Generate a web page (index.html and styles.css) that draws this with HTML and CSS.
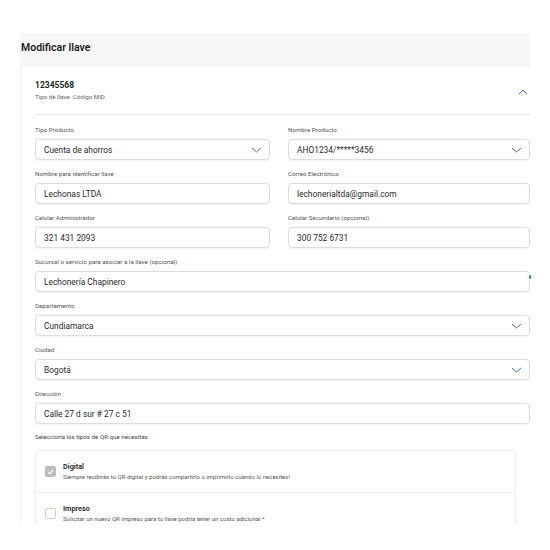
FILE: index.html
```html
<!DOCTYPE html>
<html lang="es">
<head>
<meta charset="utf-8">
<title>Modificar llave</title>
<link rel="stylesheet" href="styles.css">
</head>
<body>
<div class="page">
  <div class="panel">
    <div class="panel-head">Modificar llave</div>
    <div class="card">
      <div class="key-head">
        <div class="key-info">
          <div class="key-num">12345568</div>
          <div class="key-type">Tipo de llave: Código MID</div>
        </div>
        <svg class="chev-up" width="10" height="6" viewBox="0 0 10 6"><path d="M1 5 L5 1.2 L9 5" fill="none" stroke="#3f6fd0" stroke-width="1"/></svg>
      </div>
      <div class="form">
        <div class="row two">
          <div class="field">
            <div class="label">Tipo Producto</div>
            <div class="box select"><span>Cuenta de ahorros</span><svg class="chev" width="11" height="6" viewBox="0 0 11 6"><path d="M1 1 L5.5 5 L10 1" fill="none" stroke="#3f6fd0" stroke-width="1"/></svg></div>
          </div>
          <div class="field">
            <div class="label">Nombre Producto</div>
            <div class="box select"><span>AHO1234/*****3456</span><svg class="chev" width="11" height="6" viewBox="0 0 11 6"><path d="M1 1 L5.5 5 L10 1" fill="none" stroke="#3f6fd0" stroke-width="1"/></svg></div>
          </div>
        </div>
        <div class="row two">
          <div class="field">
            <div class="label">Nombre para identificar llave</div>
            <div class="box"><span>Lechonas LTDA</span></div>
          </div>
          <div class="field">
            <div class="label">Correo Electrónico</div>
            <div class="box"><span>lechonerialtda@gmail.com</span></div>
          </div>
        </div>
        <div class="row two">
          <div class="field">
            <div class="label">Celular Administrador</div>
            <div class="box"><span>321 431 2093</span></div>
          </div>
          <div class="field">
            <div class="label">Celular Secundario (opcional)</div>
            <div class="box"><span>300 752 6731</span></div>
          </div>
        </div>
        <div class="row">
          <div class="field">
            <div class="label">Sucursal o servicio para asociar a la llave (opcional)</div>
            <div class="box marked"><span>Lechonería Chapinero</span><i class="dot"></i></div>
          </div>
        </div>
        <div class="row">
          <div class="field">
            <div class="label">Departamento</div>
            <div class="box select"><span>Cundiamarca</span><svg class="chev" width="11" height="6" viewBox="0 0 11 6"><path d="M1 1 L5.5 5 L10 1" fill="none" stroke="#3f6fd0" stroke-width="1"/></svg></div>
          </div>
        </div>
        <div class="row">
          <div class="field">
            <div class="label">Ciudad</div>
            <div class="box select"><span>Bogotá</span><svg class="chev" width="11" height="6" viewBox="0 0 11 6"><path d="M1 1 L5.5 5 L10 1" fill="none" stroke="#3f6fd0" stroke-width="1"/></svg></div>
          </div>
        </div>
        <div class="row">
          <div class="field">
            <div class="label">Dirección</div>
            <div class="box"><span>Calle 27 d sur # 27 c 51</span></div>
          </div>
        </div>
        <div class="qr-label">Selecciona los tipos de QR que necesitas</div>
        <div class="qr-card">
          <div class="qr-row">
            <div class="check checked"><svg width="7" height="6" viewBox="0 0 7 6"><path d="M1 3 L2.8 4.8 L6 1.2" fill="none" stroke="#fff" stroke-width="1.1"/></svg></div>
            <div class="qr-text">
              <div class="qr-title">Digital</div>
              <div class="qr-desc">Siempre recibirás tu QR digital y podrás compartirlo o imprimirlo cuando lo necesites!</div>
            </div>
          </div>
          <div class="qr-row">
            <div class="check"></div>
            <div class="qr-text">
              <div class="qr-title">Impreso</div>
              <div class="qr-desc">Solicitar un nuevo QR impreso para tu llave podría tener un costo adicional *</div>
            </div>
          </div>
        </div>
      </div>
    </div>
  </div>
</div>
</body>
</html>
```

FILE: styles.css
```css
* { box-sizing: border-box; }
html, body { margin: 0; padding: 0; background: #fff; }
body { font-family: Roboto, "Liberation Sans", sans-serif; color: #222; }
.page { height: 525px; overflow: hidden; padding: 33px 20px 0 20px; }
.panel { width: 510px; background: #f7f7f7; padding-left: 2px; }
.panel-head {
  height: 32px; line-height: 30px; margin-left: -1px;
  font-size: 10.5px; font-weight: 600; color: #1d1d1d;
}
.card { background: #fff; border-top: 1px solid #eeeeee; padding: 0 0 20px 13px; }
.key-head {
  height: 49px; border-bottom: 1px solid #e6e6e6;
  display: flex; align-items: center; justify-content: space-between;
  padding-right: 2px;
}
.key-info { padding-top: 1px; }
.key-num { font-size: 8.5px; font-weight: 700; line-height: 11px; color: #1e1e1e; }
.key-type { font-size: 6.2px; line-height: 8px; color: #666; margin-top: 2px; }
.chev-up { display: block; margin-top: 4px; }
.form { padding-top: 11px; }
.row { margin-bottom: 10px; }
.row.two { display: grid; grid-template-columns: 235px 242px; column-gap: 18px; }
.label { font-size: 6.2px; line-height: 8px; color: #555; margin-bottom: 5px; white-space: nowrap; }
.box {
  position: relative; height: 21px; border: 1px solid #dcdcdc; border-radius: 4px;
  display: flex; align-items: center; justify-content: space-between;
  padding: 0 7px 0 8px; font-size: 8.4px; color: #2a2a2a;
  box-shadow: 0 0.5px 1px rgba(0,0,0,0.06);
}
.chev { display: block; }
.dot {
  position: absolute; right: -2px; top: 3px; width: 2px; height: 4px;
  background: #3aa23a; border-radius: 1px;
}
.qr-label { font-size: 6.2px; line-height: 8px; color: #444; margin-top: -1px; margin-bottom: 9px; }
.qr-card { width: 481px; border: 1px solid #eeeeee; border-radius: 4px; }
.qr-row { height: 41px; display: flex; align-items: center; padding-left: 9px; }
.qr-row + .qr-row { border-top: 1px solid #eeeeee; }
.check {
  width: 11px; height: 11px; border: 1px solid #cfcfcf; border-radius: 2px;
  display: flex; align-items: center; justify-content: center; flex: none;
}
.check.checked { background: #bdbdbd; border-color: #bdbdbd; }
.check svg { display: block; }
.qr-text { margin-left: 7px; }
.qr-title { font-size: 7.3px; font-weight: 600; line-height: 10px; color: #222; }
.qr-desc { font-size: 6px; line-height: 8px; color: #555; margin-top: 1px; }
```
